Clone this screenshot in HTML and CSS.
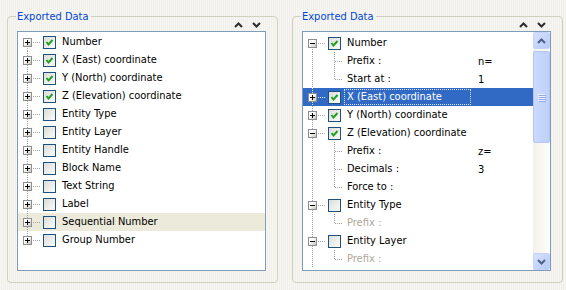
FILE: index.html
```html
<!DOCTYPE html>
<html lang="en">
<head>
    <meta charset="UTF-8">
    <title>Exported Data</title>
    <link rel="stylesheet" href="styles.css">
</head>
<body>

<div class="dialog">
    <!-- Panel izquierdo: todo contraido -->
    <fieldset class="group">
        <legend>Exported Data</legend>
        <div class="tools">
            <svg width="9" height="6" viewBox="0 0 9 6"><polyline points="1,5 4.5,1.5 8,5" /></svg>
            <svg width="9" height="6" viewBox="0 0 9 6"><polyline points="1,1 4.5,4.5 8,1" /></svg>
        </div>
        <div class="tree">
            <ul class="rows">
                <li class="row"><span class="rail first"><span class="exp plus"></span></span><span class="dash"></span><span class="cb on"><svg width="11" height="11" viewBox="0 0 11 11"><polyline points="2.5,5 4.5,7.5 8.5,3" /></svg></span><span class="name"><span class="txt">Number</span></span></li>
                <li class="row"><span class="rail"><span class="exp plus"></span></span><span class="dash"></span><span class="cb on"><svg width="11" height="11" viewBox="0 0 11 11"><polyline points="2.5,5 4.5,7.5 8.5,3" /></svg></span><span class="name"><span class="txt">X (East) coordinate</span></span></li>
                <li class="row"><span class="rail"><span class="exp plus"></span></span><span class="dash"></span><span class="cb on"><svg width="11" height="11" viewBox="0 0 11 11"><polyline points="2.5,5 4.5,7.5 8.5,3" /></svg></span><span class="name"><span class="txt">Y (North) coordinate</span></span></li>
                <li class="row"><span class="rail"><span class="exp plus"></span></span><span class="dash"></span><span class="cb on"><svg width="11" height="11" viewBox="0 0 11 11"><polyline points="2.5,5 4.5,7.5 8.5,3" /></svg></span><span class="name"><span class="txt">Z (Elevation) coordinate</span></span></li>
                <li class="row"><span class="rail"><span class="exp plus"></span></span><span class="dash"></span><span class="cb"></span><span class="name"><span class="txt">Entity Type</span></span></li>
                <li class="row"><span class="rail"><span class="exp plus"></span></span><span class="dash"></span><span class="cb"></span><span class="name"><span class="txt">Entity Layer</span></span></li>
                <li class="row"><span class="rail"><span class="exp plus"></span></span><span class="dash"></span><span class="cb"></span><span class="name"><span class="txt">Entity Handle</span></span></li>
                <li class="row"><span class="rail"><span class="exp plus"></span></span><span class="dash"></span><span class="cb"></span><span class="name"><span class="txt">Block Name</span></span></li>
                <li class="row"><span class="rail"><span class="exp plus"></span></span><span class="dash"></span><span class="cb"></span><span class="name"><span class="txt">Text String</span></span></li>
                <li class="row"><span class="rail"><span class="exp plus"></span></span><span class="dash"></span><span class="cb"></span><span class="name"><span class="txt">Label</span></span></li>
                <li class="row hover"><span class="rail"><span class="exp plus"></span></span><span class="dash"></span><span class="cb"></span><span class="name"><span class="txt">Sequential Number</span></span></li>
                <li class="row"><span class="rail last"><span class="exp plus"></span></span><span class="dash"></span><span class="cb"></span><span class="name"><span class="txt">Group Number</span></span></li>
            </ul>
        </div>
    </fieldset>

    <!-- Panel derecho: nodos abiertos con propiedades -->
    <fieldset class="group">
        <legend>Exported Data</legend>
        <div class="tools">
            <svg width="9" height="6" viewBox="0 0 9 6"><polyline points="1,5 4.5,1.5 8,5" /></svg>
            <svg width="9" height="6" viewBox="0 0 9 6"><polyline points="1,1 4.5,4.5 8,1" /></svg>
        </div>
        <div class="tree scroll">
            <ul class="rows">
                <li class="row"><span class="rail first"><span class="exp"></span></span><span class="dash"></span><span class="cb on"><svg width="11" height="11" viewBox="0 0 11 11"><polyline points="2.5,5 4.5,7.5 8.5,3" /></svg></span><span class="name"><span class="txt">Number</span></span></li>
                <li class="row"><span class="rail"></span><span class="gap"></span><span class="branch"></span><span class="name"><span class="txt">Prefix :</span></span><span class="val">n=</span></li>
                <li class="row"><span class="rail"></span><span class="gap"></span><span class="branch end"></span><span class="name"><span class="txt">Start at :</span></span><span class="val">1</span></li>
                <li class="row selected"><span class="rail"><span class="exp plus"></span></span><span class="dash"></span><span class="cb on"><svg width="11" height="11" viewBox="0 0 11 11"><polyline points="2.5,5 4.5,7.5 8.5,3" /></svg></span><span class="name"><span class="txt">X (East) coordinate</span></span></li>
                <li class="row"><span class="rail"><span class="exp plus"></span></span><span class="dash"></span><span class="cb on"><svg width="11" height="11" viewBox="0 0 11 11"><polyline points="2.5,5 4.5,7.5 8.5,3" /></svg></span><span class="name"><span class="txt">Y (North) coordinate</span></span></li>
                <li class="row"><span class="rail"><span class="exp"></span></span><span class="dash"></span><span class="cb on"><svg width="11" height="11" viewBox="0 0 11 11"><polyline points="2.5,5 4.5,7.5 8.5,3" /></svg></span><span class="name"><span class="txt">Z (Elevation) coordinate</span></span></li>
                <li class="row"><span class="rail"></span><span class="gap"></span><span class="branch"></span><span class="name"><span class="txt">Prefix :</span></span><span class="val">z=</span></li>
                <li class="row"><span class="rail"></span><span class="gap"></span><span class="branch"></span><span class="name"><span class="txt">Decimals :</span></span><span class="val">3</span></li>
                <li class="row"><span class="rail"></span><span class="gap"></span><span class="branch end"></span><span class="name"><span class="txt">Force to :</span></span></li>
                <li class="row"><span class="rail"><span class="exp"></span></span><span class="dash"></span><span class="cb"></span><span class="name"><span class="txt">Entity Type</span></span></li>
                <li class="row off"><span class="rail"></span><span class="gap"></span><span class="branch end"></span><span class="name"><span class="txt">Prefix :</span></span></li>
                <li class="row"><span class="rail"><span class="exp"></span></span><span class="dash"></span><span class="cb"></span><span class="name"><span class="txt">Entity Layer</span></span></li>
                <li class="row off"><span class="rail"></span><span class="gap"></span><span class="branch end"></span><span class="name"><span class="txt">Prefix :</span></span></li>
            </ul>
            <div class="sbar">
                <div class="sbtn"><svg width="9" height="6" viewBox="0 0 9 6"><polyline points="1,5 4.5,1.5 8,5" /></svg></div>
                <div class="thumb"><span></span><span></span><span></span><span></span></div>
                <div class="track"></div>
                <div class="sbtn"><svg width="9" height="6" viewBox="0 0 9 6"><polyline points="1,1 4.5,4.5 8,1" /></svg></div>
            </div>
        </div>
    </fieldset>
</div>

</body>
</html>
```

FILE: styles.css
```css
body {
    margin: 0;
    font-family: "DejaVu Sans Condensed", "Liberation Sans", sans-serif;
    font-size: 11px;
    color: #000;
    background: repeating-linear-gradient(90deg, #f7f6f2 0 1px, #f0efea 1px 2px);
}
.dialog {
    display: flex;
    gap: 14px;
    padding: 10px 0 0 7px;
}
.group {
    width: 271px;
    box-sizing: border-box;
    margin: 0;
    padding: 0 11px 11px 9px;
    border: 1px solid #d0d0bf;
    border-radius: 4px;
}
.group legend {
    color: #0046d5;
    line-height: 13px;
    padding: 0 2px 0 1px;
    margin-left: -1px;
}
.tools {
    display: flex;
    justify-content: flex-end;
    align-items: center;
    gap: 9px;
    height: 12px;
    margin-top: -4px;
    padding-right: 5px;
}
.tools svg polyline {
    fill: none;
    stroke: #2c2c2c;
    stroke-width: 2;
}

/* Caja del arbol */
.tree {
    display: flex;
    height: 240px;
    box-sizing: border-box;
    border: 1px solid #7f9db9;
    background: #fff;
    overflow: hidden;
}
.rows {
    flex: 1;
    list-style: none;
    margin: 0;
    padding: 1px 0 0;
}
.scroll .rows {
    padding-top: 2px;
}
.row {
    --dot: #a0a0a0;
    display: flex;
    align-items: center;
    height: 18px;
    padding-left: 5px;
    white-space: nowrap;
}
.row.hover {
    background: #ebeadb;
}
.row.selected {
    --dot: #e6ecf8;
    background: #316ac5;
    color: #fff;
}
.row.off {
    color: #aca899;
}
.rail {
    width: 9px;
    height: 18px;
    display: flex;
    align-items: center;
    background: repeating-linear-gradient(var(--dot) 0 1px, transparent 1px 2px) center / 1px 100% no-repeat;
}
.rail.first {
    background-position: center bottom;
    background-size: 1px 50%;
}
.rail.last {
    background-position: center top;
    background-size: 1px 50%;
}
.exp {
    position: relative;
    width: 9px;
    height: 9px;
    box-sizing: border-box;
    border: 1px solid #8a9094;
    background: linear-gradient(135deg, #fff 35%, #c9c4b6);
}
.exp::before,
.plus::after {
    content: "";
    position: absolute;
    background: #000;
}
.exp::before {
    left: 1px;
    top: 3px;
    width: 5px;
    height: 1px;
}
.plus::after {
    left: 3px;
    top: 1px;
    width: 1px;
    height: 5px;
}
.dash {
    width: 7px;
    height: 1px;
    margin-left: 1px;
    margin-right: 3px;
    background: repeating-linear-gradient(90deg, var(--dot) 0 1px, transparent 1px 2px);
}
.gap {
    width: 11px;
}
.cb {
    width: 13px;
    height: 13px;
    box-sizing: border-box;
    border: 1px solid #1c5180;
    background: linear-gradient(135deg, #dcdcd7, #fbfbf9);
}
.cb svg {
    display: block;
}
.cb polyline {
    fill: none;
    stroke: #21a121;
    stroke-width: 2;
}
.branch {
    position: relative;
    width: 13px;
    height: 18px;
    background: repeating-linear-gradient(var(--dot) 0 1px, transparent 1px 2px) 6px 0 / 1px 100% no-repeat;
}
.branch.end {
    background-size: 1px 9px;
}
.branch::after {
    content: "";
    position: absolute;
    left: 7px;
    top: 9px;
    width: 7px;
    height: 1px;
    background: repeating-linear-gradient(90deg, var(--dot) 0 1px, transparent 1px 2px);
}
.name {
    width: 133px;
    margin-left: 4px;
}
.txt {
    display: inline-block;
    padding: 0 2px;
    line-height: 14px;
    border: 1px dotted transparent;
    margin-left: -1px;
}
.selected .txt {
    width: 127px;
    box-sizing: border-box;
    border-color: #d8e2f4;
}

/* Barra de desplazamiento */
.sbar {
    width: 17px;
    display: flex;
    flex-direction: column;
    gap: 2px;
    background: linear-gradient(90deg, #f3f1ec, #fdfdfa);
}
.sbtn {
    height: 17px;
    box-sizing: border-box;
    display: flex;
    align-items: center;
    justify-content: center;
    border: 1px solid #c3d3fd;
    border-radius: 2px;
    background: linear-gradient(135deg, #d6e1fd, #b6cbf8);
}
.sbtn polyline {
    fill: none;
    stroke: #4d6185;
    stroke-width: 2;
}
.thumb {
    height: 92px;
    box-sizing: border-box;
    display: flex;
    flex-direction: column;
    align-items: center;
    justify-content: center;
    gap: 1px;
    border: 1px solid #b1c6f4;
    border-radius: 2px;
    background: linear-gradient(90deg, #cbd9fc, #bed1fb);
}
.thumb span {
    width: 7px;
    height: 1px;
    background: #eef3fe;
    box-shadow: 1px 1px 0 #8daaf0;
}
.track {
    flex: 1;
}
```
